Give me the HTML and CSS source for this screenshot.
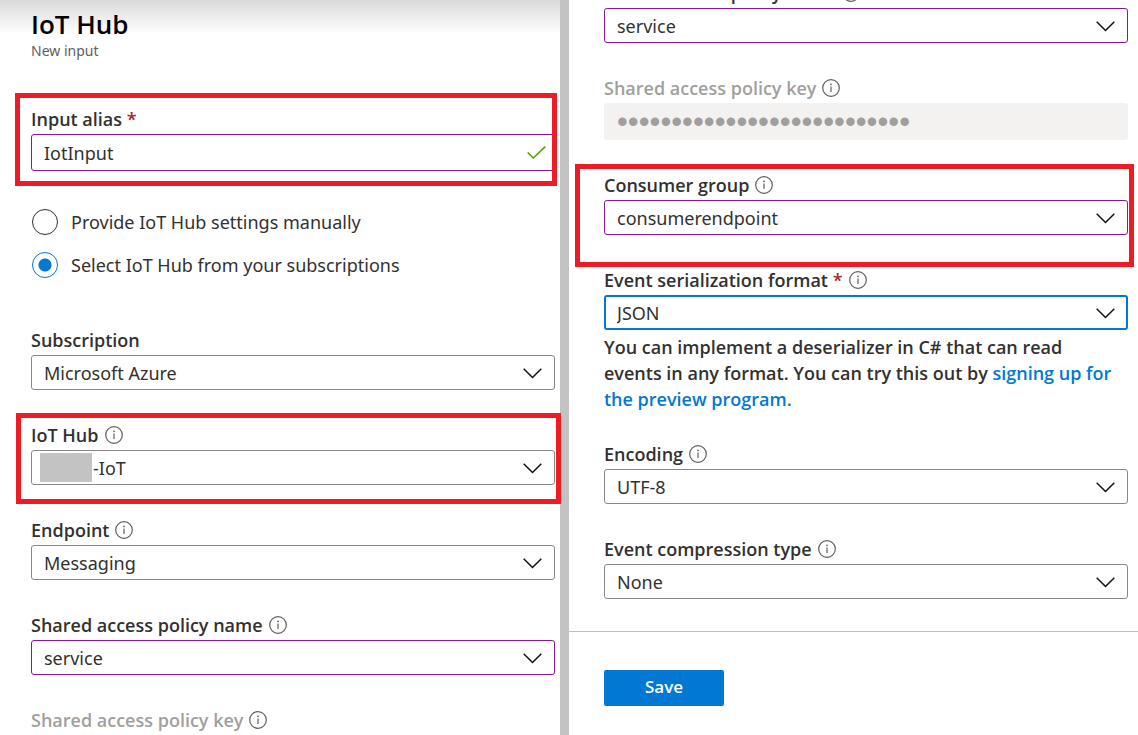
FILE: index.html
```html
<!DOCTYPE html>
<html lang="en">
<head>
<meta charset="utf-8">
<title>IoT Hub - New input</title>
<link rel="stylesheet" href="styles.css">
</head>
<body>
<svg class="defs" aria-hidden="true">
  <symbol id="info" viewBox="0 0 18 18"><circle cx="9" cy="9" r="8.3" fill="none" stroke="#605e5c" stroke-width="1.2"/><path d="M9 7.5V13" stroke="#605e5c" stroke-width="1.2"/><circle cx="9" cy="5.3" r=".9" fill="#605e5c"/></symbol>
  <symbol id="chevron" viewBox="0 0 19 11"><path d="M.7 .7 9.5 9.5 18.3 .7" fill="none" stroke="#111" stroke-width="1.5"/></symbol>
  <symbol id="tick" viewBox="0 0 19 13"><path d="M.7 6.5 6.3 12 18.3 .7" fill="none" stroke="#57a300" stroke-width="1.6"/></symbol>
</svg>
<form class="blade">
  <section class="pane pane-start">
    <header class="heading">
      <h1 class="title">IoT Hub</h1>
      <p class="subtitle">New input</p>
    </header>

    <div class="field marked marked-alias">
      <div class="label-row"><label for="alias">Input alias <span class="required">*</span></label></div>
      <div class="control"><input class="box box-text edited" id="alias" type="text" value="IotInput"><svg class="tick"><use href="#tick"/></svg></div>
    </div>

    <div class="radios">
      <label class="radio"><input type="radio" name="mode">Provide IoT Hub settings manually</label>
      <label class="radio"><input type="radio" name="mode" checked>Select IoT Hub from your subscriptions</label>
    </div>

    <div class="stack">
      <div class="field">
        <div class="label-row"><label for="subscription">Subscription</label></div>
        <div class="control"><select class="box" id="subscription"><option>Microsoft Azure</option></select><svg class="chevron"><use href="#chevron"/></svg></div>
      </div>
      <div class="field marked marked-hub">
        <div class="label-row"><label for="hub">IoT Hub</label><svg class="info"><use href="#info"/></svg></div>
        <div class="control"><select class="box box-masked" id="hub"><option>-IoT</option></select><span class="mask"></span><svg class="chevron"><use href="#chevron"/></svg></div>
      </div>
      <div class="field">
        <div class="label-row"><label for="endpoint">Endpoint</label><svg class="info"><use href="#info"/></svg></div>
        <div class="control"><select class="box" id="endpoint"><option>Messaging</option></select><svg class="chevron"><use href="#chevron"/></svg></div>
      </div>
      <div class="field">
        <div class="label-row"><label for="policy">Shared access policy name</label><svg class="info"><use href="#info"/></svg></div>
        <div class="control"><select class="box edited" id="policy"><option>service</option></select><svg class="chevron"><use href="#chevron"/></svg></div>
      </div>
      <div class="label-row disabled"><span>Shared access policy key</span><svg class="info"><use href="#info"/></svg></div>
    </div>
  </section>

  <div class="divider"></div>

  <section class="pane pane-end">
    <div class="stack scrolled">
      <div class="field">
        <div class="label-row"><label for="policy2">Shared access policy name</label><svg class="info"><use href="#info"/></svg></div>
        <div class="control"><select class="box edited" id="policy2"><option>service</option></select><svg class="chevron"><use href="#chevron"/></svg></div>
      </div>
      <div class="field">
        <div class="label-row disabled"><label for="key">Shared access policy key</label><svg class="info"><use href="#info"/></svg></div>
        <div class="control"><input class="box box-text box-key" id="key" type="password" value="aaaaaaaaaaaaaaaaaaaaaaaaaaa" disabled></div>
      </div>
      <div class="field marked marked-group">
        <div class="label-row"><label for="group">Consumer group</label><svg class="info"><use href="#info"/></svg></div>
        <div class="control"><select class="box edited" id="group"><option>consumerendpoint</option></select><svg class="chevron"><use href="#chevron"/></svg></div>
      </div>
      <div class="field">
        <div class="label-row"><label for="format">Event serialization format <span class="required">*</span></label><svg class="info"><use href="#info"/></svg></div>
        <div class="control"><select class="box focused" id="format"><option>JSON</option></select><svg class="chevron"><use href="#chevron"/></svg></div>
        <p class="note">You can implement a deserializer in C# that can read events in any format. You can try this out by <a href="#preview">signing up for the preview program.</a></p>
      </div>
      <div class="field">
        <div class="label-row"><label for="encoding">Encoding</label><svg class="info"><use href="#info"/></svg></div>
        <div class="control"><select class="box" id="encoding"><option>UTF-8</option></select><svg class="chevron"><use href="#chevron"/></svg></div>
      </div>
      <div class="field">
        <div class="label-row"><label for="compression">Event compression type</label><svg class="info"><use href="#info"/></svg></div>
        <div class="control"><select class="box" id="compression"><option>None</option></select><svg class="chevron"><use href="#chevron"/></svg></div>
      </div>
    </div>
    <footer class="footer"><button class="save" type="button">Save</button></footer>
  </section>
</form>
</body>
</html>
```
FILE: styles.css
```css
* { box-sizing: border-box; }
body {
  margin: 0;
  background: #fff;
  color: #323130;
  font: 18px/26px "Noto Sans", "Open Sans", sans-serif;
}
.defs { position: absolute; width: 0; height: 0; }
.blade {
  display: grid;
  grid-template-columns: 560fr 9px 569fr;
  min-height: 100vh;
}
.divider { background: #c3c3c3; }
.pane { min-width: 0; }
.pane-start {
  padding: 7px 5px 0 31px;
  background: linear-gradient(#dadada, #fff 34px);
}
.pane-end { padding-top: 1px; }

.heading { margin-bottom: 45px; }
.title { margin: 0; color: #000; font: 600 26px/34px "Open Sans", "Noto Sans", sans-serif; }
.subtitle { margin: 0; color: #605e5c; font-size: 14px; line-height: 20px; }

.stack { display: flex; flex-direction: column; gap: 32px; }
.scrolled { margin-top: -21px; padding: 0 10px 32px 35px; }
.field { position: relative; }
.label-row {
  display: flex;
  align-items: center;
  gap: 6px;
  height: 26px;
  margin-bottom: 2px;
  font-family: "Open Sans", "Noto Sans", sans-serif;
  font-weight: 600;
}
.disabled { color: #a19f9d; }
.required { color: #a4262c; }
.info { width: 18px; height: 18px; flex: none; }

.control { position: relative; }
.box {
  display: block;
  width: 100%;
  height: 35px;
  padding: 0 48px 0 12px;
  border: 1px solid #8a8886;
  border-radius: 3px;
  background: #fff;
  color: #323130;
  font: inherit;
  line-height: 26px;
  appearance: none;
}
.box-text { height: 37px; }
.edited { border-color: #881798; }
.focused { border: 2px solid #0078d4; padding-left: 11px; }
.box-masked { padding-left: 61px; }
.mask { position: absolute; left: 9px; top: 3px; width: 52px; height: 29px; background: #c3c3c3; }
.box-key {
  border-color: #f3f2f1;
  background: #f3f2f1;
  color: #a19f9d;
  font-family: "Liberation Sans", sans-serif;
  font-size: 31px;
}
.chevron { position: absolute; right: 13px; top: 13px; width: 19px; height: 11px; pointer-events: none; }
.tick { position: absolute; right: 9px; top: 12px; width: 19px; height: 13px; }

.marked::after {
  content: "";
  position: absolute;
  z-index: 1;
  border: 5px solid #ed1c24;
  pointer-events: none;
}
.marked-alias::after { inset: -13px -2px -15px -16px; }
.marked-hub::after { inset: -9px -6px -19px -15px; }
.marked-group::after { inset: -8px -6px -32px -29px; }

.radios { display: flex; flex-direction: column; gap: 17px; margin: 38px 0 49px; }
.radio { display: flex; align-items: center; gap: 13px; height: 26px; line-height: 30px; }
.radio input {
  appearance: none;
  width: 26px;
  height: 26px;
  margin: 0 0 0 1px;
  border: 1px solid #323130;
  border-radius: 50%;
}
.radio input:checked {
  border-color: #0078d4;
  background: radial-gradient(circle, #0078d4 6px, #fff 7px);
}

.note {
  margin: 4px 0 -3px;
  padding-right: 4px;
  font-family: "Open Sans", "Noto Sans", sans-serif;
  font-weight: 600;
}
.note a { color: #0078d4; text-decoration: none; }

.footer { padding: 38px 35px 0; border-top: 1px solid #bdbdbd; }
.save {
  width: 120px;
  height: 36px;
  padding: 0 0 2px;
  border: 0;
  border-radius: 2px;
  background: #0078d4;
  color: #fff;
  font: 600 17px/26px "Open Sans", "Noto Sans", sans-serif;
}
```
